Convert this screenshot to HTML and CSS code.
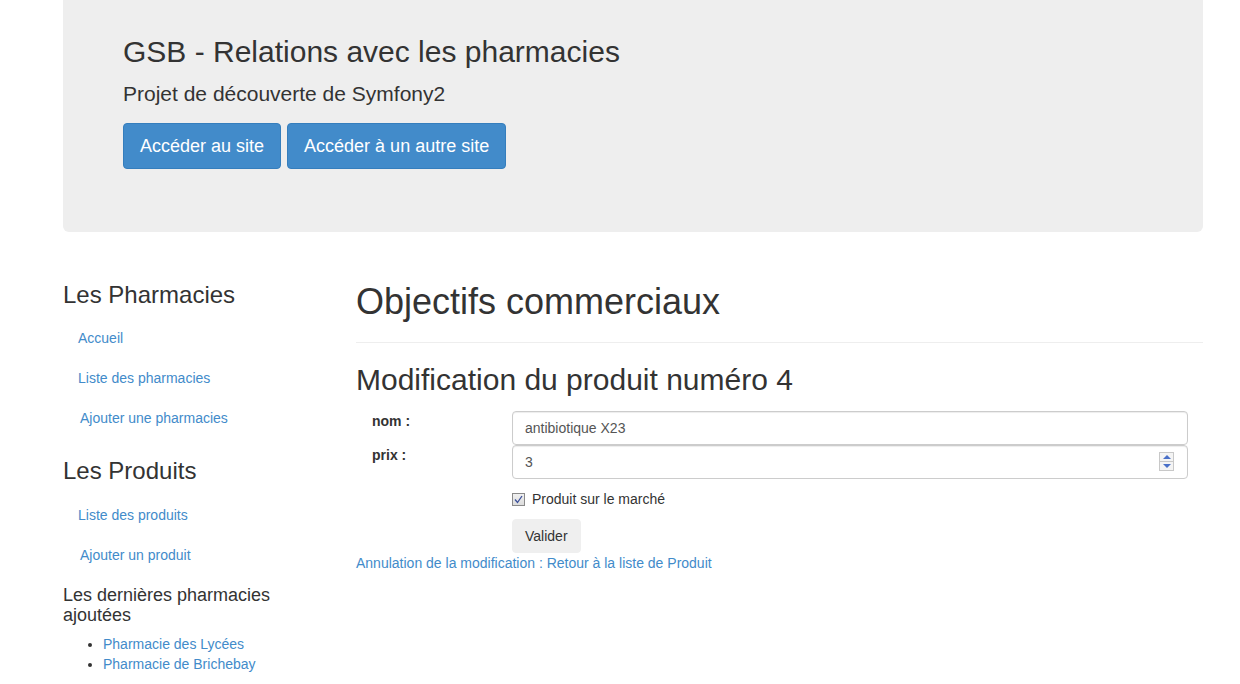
FILE: index.html
```html
<!DOCTYPE html>
<html lang="fr">
<head>
<meta charset="utf-8">
<title>GSB - Relations avec les pharmacies</title>
<link rel="stylesheet" href="styles.css">
</head>
<body>
<div class="page">
  <div class="jumbotron">
    <h1 class="jt-title">GSB - Relations avec les pharmacies</h1>
    <p class="jt-lead">Projet de découverte de Symfony2</p>
    <p class="jt-actions">
      <a class="btn-lg btn-primary" href="#">Accéder au site</a>
      <a class="btn-lg btn-primary" href="#">Accéder à un autre site</a>
    </p>
  </div>

  <div class="row">
    <aside class="sidebar">
      <h3 class="side-title">Les Pharmacies</h3>
      <ul class="nav">
        <li><a href="#">Accueil</a></li>
        <li><a href="#">Liste des pharmacies</a></li>
        <li><a class="shift" href="#">Ajouter une pharmacies</a></li>
      </ul>
      <h3 class="side-title second">Les Produits</h3>
      <ul class="nav">
        <li><a href="#">Liste des produits</a></li>
        <li><a class="shift" href="#">Ajouter un produit</a></li>
      </ul>
      <h4 class="side-sub">Les dernières pharmacies ajoutées</h4>
      <ul class="latest">
        <li><a href="#">Pharmacie des Lycées</a></li>
        <li><a href="#">Pharmacie de Brichebay</a></li>
      </ul>
    </aside>

    <main class="main">
      <h1 class="page-title">Objectifs commerciaux</h1>
      <hr class="divider">
      <h2 class="sub-title">Modification du produit numéro 4</h2>
      <form class="form">
        <div class="form-row">
          <label class="form-label" for="nom">nom :</label>
          <input class="form-control" id="nom" type="text" value="antibiotique X23">
        </div>
        <div class="form-row">
          <label class="form-label" for="prix">prix :</label>
          <div class="input-wrap">
            <input class="form-control" id="prix" type="text" value="3">
            <span class="spinner"><span class="spin-up"></span><span class="spin-down"></span></span>
          </div>
        </div>
        <div class="form-row check-row">
          <span class="form-label"></span>
          <label class="check-label"><span class="checkbox"><svg width="9" height="9" viewBox="0 0 9 9"><path d="M1 4.5 L3.5 7.5 L8 1" fill="none" stroke="#3a4f9a" stroke-width="1.3"/></svg></span>Produit sur le marché</label>
        </div>
        <div class="form-row">
          <span class="form-label"></span>
          <button class="btn-default" type="button">Valider</button>
        </div>
      </form>
      <a class="cancel" href="#">Annulation de la modification : Retour à la liste de Produit</a>
    </main>
  </div>
</div>
</body>
</html>
```
FILE: styles.css
```css
* { box-sizing: border-box; }
html, body { margin: 0; padding: 0; background: #fff; }
body {
  font-family: "Liberation Sans", Arial, Helvetica, sans-serif;
  font-size: 14px;
  line-height: 20px;
  color: #333;
}
a { color: #428bca; text-decoration: none; }

.page { margin-left: 63px; width: 1140px; }

.jumbotron {
  background: #eee;
  border-radius: 0 0 6px 6px;
  padding: 35px 60px 48px;
  margin-bottom: 30px;
  height: 232px;
}
.jt-title {
  margin: 0 0 10px;
  font-size: 30px;
  line-height: 33px;
  font-weight: normal;
  color: #333;
}
.jt-lead {
  margin: 0 0 15px;
  font-size: 21px;
  line-height: 30px;
  padding-top: 1px;
  height: 30px;
}
.jt-actions { margin: 0; display: flex; gap: 6px; }
.btn-lg {
  display: inline-block;
  padding: 10px 16px;
  font-size: 18px;
  line-height: 24px;
  border-radius: 4px;
  border: 1px solid #357ebd;
}
.btn-primary { background: #428bca; color: #fff; }

.row { display: flex; align-items: flex-start; }
.sidebar { width: 263px; margin-right: 30px; }
.main { width: 847px; }

.side-title {
  margin: 20px 0 10px;
  font-size: 24px;
  line-height: 26.4px;
  font-weight: normal;
}
.nav { list-style: none; margin: 0; padding: 0; }
.nav a { display: block; padding: 10px 15px; line-height: 20px; }
.nav a.shift { padding-left: 17px; }
.side-sub {
  margin: 10px 0 9px;
  font-size: 18px;
  line-height: 20px;
  font-weight: normal;
}
.latest { margin: 0; padding-left: 40px; }
.latest li { line-height: 20px; }

.page-title {
  margin: 20px 0 10px;
  font-size: 36px;
  line-height: 40px;
  font-weight: normal;
}
.divider { border: 0; border-top: 1px solid #eee; margin: 20px 0 20px; }
.sub-title {
  margin: 0 0 15px;
  font-size: 30px;
  line-height: 33px;
  font-weight: normal;
}
.form { margin: 0; }
.form-row { display: flex; align-items: flex-start; }
.form-label {
  width: 156px;
  flex: none;
  padding-left: 16px;
  font-weight: bold;
  line-height: 20px;
}
.form-control {
  display: block;
  width: 676px;
  height: 34px;
  padding: 6px 12px;
  font-family: inherit;
  font-size: 14px;
  line-height: 20px;
  color: #555;
  background: #fff;
  border: 1px solid #ccc;
  border-radius: 4px;
  box-shadow: inset 0 1px 1px rgba(0,0,0,.075);
  outline: none;
}
.input-wrap { position: relative; }
.spinner {
  position: absolute;
  right: 14px;
  top: 7px;
  width: 15px;
  height: 19px;
  border: 1px solid #c8c8c8;
  display: flex;
  flex-direction: column;
  background: #f4f4f4;
}
.spin-up, .spin-down { flex: 1; position: relative; }
.spin-up { border-bottom: 1px solid #c8c8c8; }
.spin-up::after, .spin-down::after {
  content: "";
  position: absolute;
  left: 3px;
  width: 0; height: 0;
  border-left: 4px solid transparent;
  border-right: 4px solid transparent;
}
.spin-up::after { top: 2px; border-bottom: 4px solid #4a70c8; }
.spin-down::after { top: 2px; border-top: 4px solid #4a70c8; }

.check-row { margin-top: 10px; margin-bottom: 10px; }
.check-label { display: flex; align-items: center; line-height: 20px; }
.checkbox {
  width: 13px; height: 13px;
  border: 1px solid #8a8a8a;
  background: linear-gradient(#f0f0f0, #dcdcdc);
  margin-right: 7px;
  display: flex; align-items: center; justify-content: center;
}
.btn-default {
  height: 34px;
  padding: 6px 12px;
  font-family: inherit;
  font-size: 14px;
  line-height: 20px;
  color: #333;
  background: #efefef;
  border: 1px solid #efefef;
  border-radius: 4px;
}
.cancel { display: block; line-height: 20px; }
```
